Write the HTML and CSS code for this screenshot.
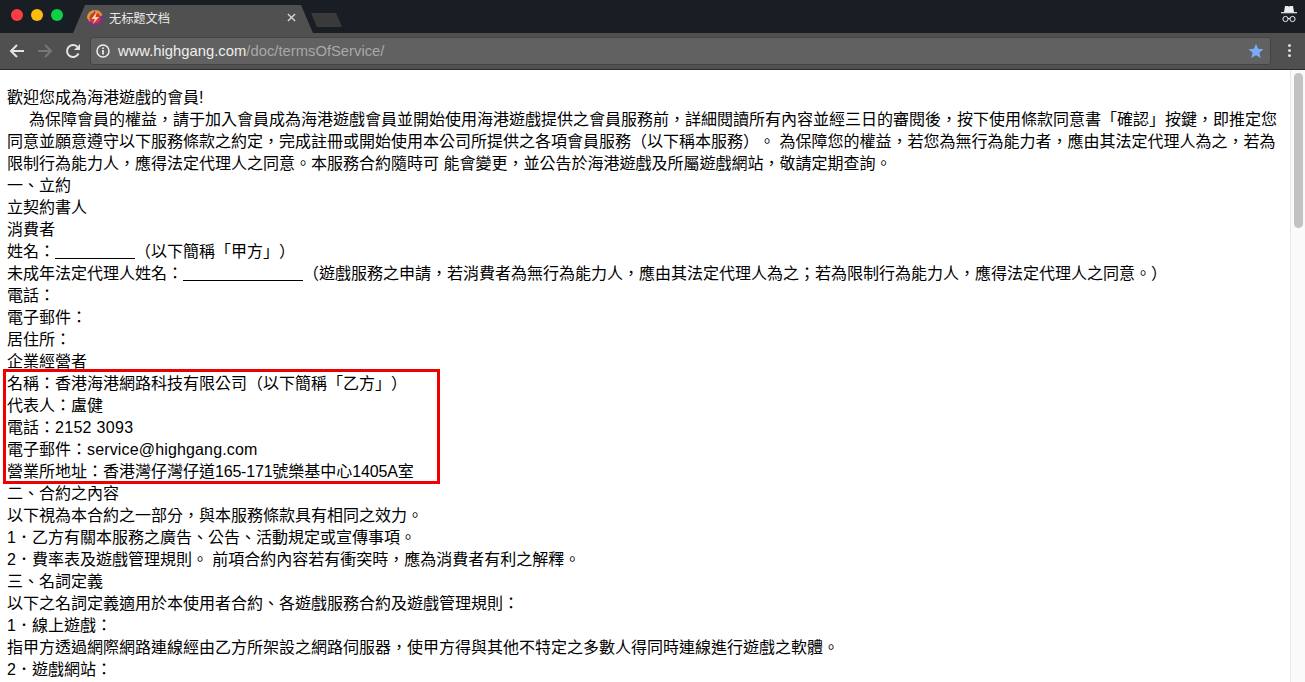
FILE: index.html
```html
<!DOCTYPE html>
<html lang="zh-Hant">
<head>
<meta charset="utf-8">
<title>无标题文档</title>
<link rel="stylesheet" href="styles.css">
</head>
<body>
<div class="browser">
  <header class="tabbar">
    <div class="lights"><span class="light red"></span><span class="light yellow"></span><span class="light green"></span></div>
    <div class="tab">
      <svg class="favicon" viewBox="0 0 16 16"><circle cx="8" cy="8" r="8" fill="#7b2f8e"/><path d="M8 0a8 8 0 0 1 7.500 5.200L8 8z" fill="#e0952c"/><path d="M0 8a8 8 0 0 1 8-8L3 12z" fill="#d8a03a"/><circle cx="8" cy="8" r="5.500" fill="#d2392e"/><path d="M10 1.500 4.500 9H8l-2.500 5.500L12 7H8.500z" fill="#f3d6b8"/></svg>
      <span class="tab-title">无标题文档</span>
      <svg class="tab-close" viewBox="0 0 10 10"><path d="M1 1l8 8M9 1l-8 8" stroke="#d6d6d6" stroke-width="1.500"/></svg>
    </div>
    <div class="newtab"></div>
    <svg class="incognito" viewBox="0 0 18 18"><path d="M5 1h2.500l1.500.6 1.500-.6H13l1 6H4z" fill="#eee"/><path d="M1 7.700h16" stroke="#eee" stroke-width="1.200"/><circle cx="5.500" cy="14" r="2.600" fill="none" stroke="#eee" stroke-width="1"/><circle cx="12.500" cy="14" r="2.600" fill="none" stroke="#eee" stroke-width="1"/><path d="M8 13.500h2" stroke="#eee"/></svg>
  </header>
  <nav class="toolbar">
    <svg class="nav-icon" viewBox="0 0 16 16"><path d="M15 8H2M8 2 2 8l6 6" fill="none" stroke="#e3e3e3" stroke-width="2"/></svg>
    <svg class="nav-icon" viewBox="0 0 16 16"><path d="M1 8h13M8 2l6 6-6 6" fill="none" stroke="#777" stroke-width="2"/></svg>
    <svg class="nav-icon" viewBox="0 0 16 16"><path d="M13.500 10.500A6 6 0 1 1 12.300 3.800" fill="none" stroke="#e3e3e3" stroke-width="2"/><path d="M15 1v6H9z" fill="#e3e3e3"/></svg>
    <div class="omnibox">
      <svg class="info" viewBox="0 0 14 14"><circle cx="7" cy="7" r="6" fill="none" stroke="#eee" stroke-width="1.500"/><path d="M7 6v4.500M7 3.500v1.500" stroke="#eee" stroke-width="1.700"/></svg>
      <span class="url"><span class="host">www.highgang.com</span>/doc/termsOfService/</span>
      <svg class="star" viewBox="0 0 16 16"><path d="M8 .8l2.100 5 5.400.4-4.100 3.500 1.300 5.300L8 12.200 3.300 15l1.300-5.300L.5 6.200l5.400-.4z" fill="#7baaf7"/></svg>
    </div>
    <div class="kebab"><i></i><i></i><i></i></div>
  </nav>
  <div class="viewport">
    <main class="doc">
      <p>歡迎您成為海港遊戲的會員!</p>
      <p class="intro">為保障會員的權益，請于加入會員成為海港遊戲會員並開始使用海港遊戲提供之會員服務前，詳細閱讀所有內容並經三日的審閱後，按下使用條款同意書「確認」按鍵，即推定您同意並願意遵守以下服務條款之約定，完成註冊或開始使用本公司所提供之各項會員服務（以下稱本服務）。 為保障您的權益，若您為無行為能力者，應由其法定代理人為之，若為限制行為能力人，應得法定代理人之同意。本服務合約隨時可 能會變更，並公告於海港遊戲及所屬遊戲網站，敬請定期查詢。</p>
      <p>一、立約</p>
      <p>立契約書人</p>
      <p>消費者</p>
      <p>姓名：<span class="blank short"></span>（以下簡稱「甲方」）</p>
      <p>未成年法定代理人姓名：<span class="blank long"></span>（遊戲服務之申請，若消費者為無行為能力人，應由其法定代理人為之；若為限制行為能力人，應得法定代理人之同意。）</p>
      <p>電話：</p>
      <p>電子郵件：</p>
      <p>居住所：</p>
      <p>企業經營者</p>
      <p>名稱：香港海港網路科技有限公司（以下簡稱「乙方」）</p>
      <p>代表人：盧健</p>
      <p>電話：<span class="phone">2152 3093</span></p>
      <p>電子郵件：<span class="mail">service@highgang.com</span></p>
      <p>營業所地址：香港灣仔灣仔道<span class="range">165-171</span>號樂基中心<span class="range">1405A</span>室</p>
      <p>二、合約之內容</p>
      <p>以下視為本合約之一部分，與本服務條款具有相同之效力。</p>
      <p>1．乙方有關本服務之廣告、公告、活動規定或宣傳事項。</p>
      <p>2．費率表及遊戲管理規則。 前項合約內容若有衝突時，應為消費者有利之解釋。</p>
      <p>三、名詞定義</p>
      <p>以下之名詞定義適用於本使用者合約、各遊戲服務合約及遊戲管理規則：</p>
      <p>1．線上遊戲：</p>
      <p>指甲方透過網際網路連線經由乙方所架設之網路伺服器，使甲方得與其他不特定之多數人得同時連線進行遊戲之軟體。</p>
      <p>2．遊戲網站：</p>
    </main>
    <div class="highlight"></div>
    <div class="scrollbar"><div class="thumb"></div></div>
  </div>
</div>
</body>
</html>
```
FILE: styles.css
```css
* { box-sizing: border-box; }
html, body { margin: 0; height: 100%; overflow: hidden; background: #fff; }
.browser { width: 1305px; height: 682px; display: flex; flex-direction: column; overflow: hidden; }
.tabbar { height: 33px; flex: none; background: #191d24; display: flex; align-items: flex-end; padding-left: 11px; }
.lights { display: flex; gap: 8px; align-self: flex-start; padding-top: 9px; }
.light { width: 12px; height: 12px; border-radius: 50%; }
.red { background: #fc3d44; }
.yellow { background: #fdbb0e; }
.green { background: #0fd044; }
.tab { width: 240px; height: 28px; margin-left: 10px; background: #505050; clip-path: polygon(0 100%, 12px 0, 228px 0, 240px 100%); display: flex; align-items: center; padding: 0 12px 3px 14px; }
.favicon { width: 16px; height: 16px; flex: none; }
.tab-title { margin-left: 6px; flex: 1; font: 12.200px "Noto Sans CJK TC", sans-serif; color: #e8e8e8; }
.tab-close { width: 9px; height: 9px; flex: none; margin-right: 5px; }
.newtab { width: 31px; height: 14px; margin: 0 0 6px -2px; background: #3a3a3a; clip-path: polygon(0 0, 25px 0, 100% 100%, 6px 100%); }
.incognito { width: 18px; height: 18px; margin-left: auto; margin-right: 7px; align-self: flex-start; margin-top: 5px; }
.toolbar { height: 37px; flex: none; background: #505050; border-bottom: 1px solid #2c2c2c; display: flex; align-items: center; padding: 0 0 1px 9px; }
.nav-icon { width: 16px; height: 16px; flex: none; margin-right: 12px; }
.omnibox { width: 1181px; height: 28px; margin-left: -3px; background: #616161; border: 1px solid #444; border-radius: 3px; display: flex; align-items: center; padding: 0 6px 0 5px; }
.info { width: 14px; height: 14px; flex: none; }
.url { margin-left: 8px; font: 14.800px "Liberation Sans", sans-serif; color: #a8a8a8; flex: 1; white-space: nowrap; }
.host { color: #eee; }
.star { width: 16px; height: 16px; flex: none; }
.kebab { margin-left: 17px; display: flex; flex-direction: column; gap: 2px; }
.kebab i { width: 3px; height: 3px; border-radius: 50%; background: #ddd; }
.viewport { flex: 1; position: relative; overflow: hidden; background: #fff; }
.doc { width: 1290px; padding: 17px 7px 0 7px; font: 16px/22px "Liberation Sans", "Noto Sans CJK TC", sans-serif; color: #000; text-spacing-trim: space-all; }
.doc p { margin: 0; }
.intro { text-indent: 22px; }
.phone { letter-spacing: .3px; }
.mail { letter-spacing: .15px; }
.range { letter-spacing: -.2px; }
.blank { display: inline-block; border-bottom: 1px solid #000; height: 10px; vertical-align: -2px; }
.short { width: 80px; }
.long { width: 120px; }
.highlight { position: absolute; left: 3px; top: 299px; width: 437px; height: 115px; border: 3px solid #ee0000; }
.scrollbar { position: absolute; right: 0; top: 0; width: 15px; height: 100%; background: #fafafa; border-left: 1px solid #e8e8e8; }
.thumb { position: absolute; left: 3px; top: 3px; width: 9px; height: 155px; border-radius: 5px; background: #c2c2c2; }
```
